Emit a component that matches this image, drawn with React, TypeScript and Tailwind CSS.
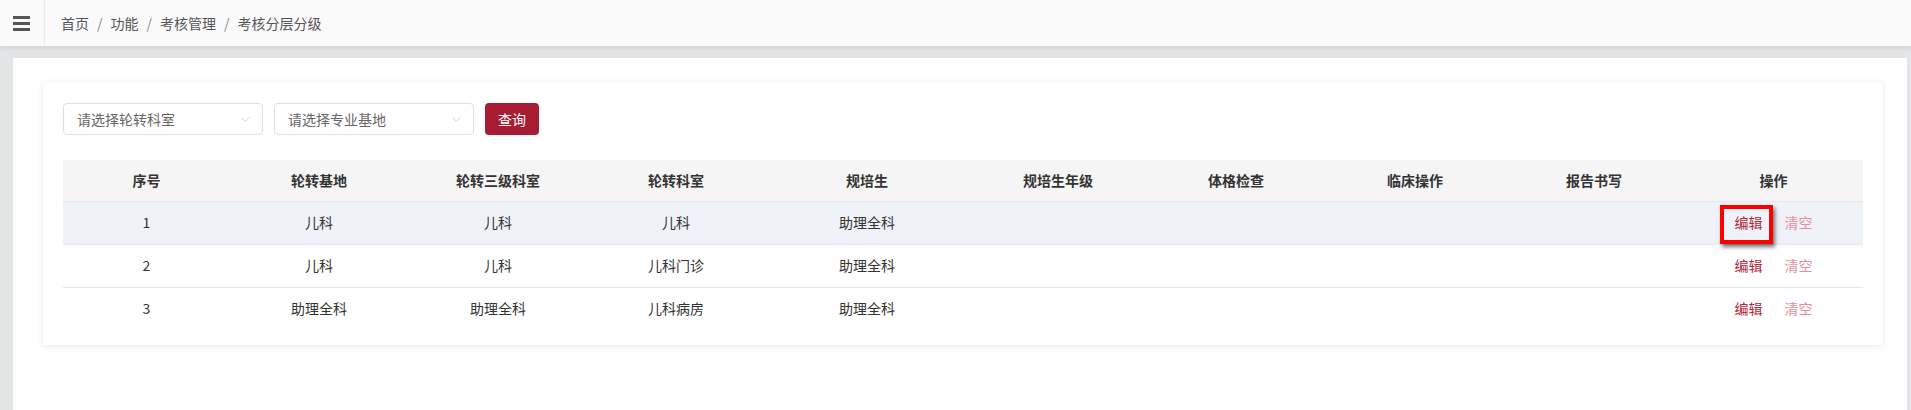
import { ChevronDown } from 'lucide-react';

type Row = {
  id: number;
  base: string;
  thirdDept: string;
  dept: string;
  trainee: string;
};

const columns: { title: string; width: string }[] = [
  { title: '序号', width: 'w-[167px]' },
  { title: '轮转基地', width: 'w-[178px]' },
  { title: '轮转三级科室', width: 'w-[180px]' },
  { title: '轮转科室', width: 'w-[176px]' },
  { title: '规培生', width: 'w-[206px]' },
  { title: '规培生年级', width: 'w-[176px]' },
  { title: '体格检查', width: 'w-[180px]' },
  { title: '临床操作', width: 'w-[178px]' },
  { title: '报告书写', width: 'w-[180px]' },
  { title: '操作', width: 'w-[179px]' },
];

const rows: Row[] = [
  { id: 1, base: '儿科', thirdDept: '儿科', dept: '儿科', trainee: '助理全科' },
  { id: 2, base: '儿科', thirdDept: '儿科', dept: '儿科门诊', trainee: '助理全科' },
  { id: 3, base: '助理全科', thirdDept: '助理全科', dept: '儿科病房', trainee: '助理全科' },
];

function SelectBox({ placeholder }: { placeholder: string }) {
  return (
    <div className="flex h-[32px] w-[200px] items-center justify-between rounded-[4px] border border-[#dcdfe6] bg-white pl-[13px] pr-[9px]">
      <span className="text-[14px] text-[#666]">{placeholder}</span>
      <ChevronDown className="h-[15px] w-[15px] text-[#c0c4cc]" strokeWidth={1.2} />
    </div>
  );
}

export default function App() {
  return (
    <div
      className="flex h-screen flex-col overflow-hidden bg-[#e3e4e6] text-[#333]"
      style={{ fontFamily: '"Microsoft YaHei", "Noto Sans CJK SC", "Noto Sans", sans-serif' }}
    >
      {/* top bar */}
      <header className="relative z-10 flex h-[46px] shrink-0 items-center bg-[#fafafa] shadow-[0_2px_4px_rgba(0,0,0,0.08)]">
        <div className="flex h-full w-[45px] items-center border-r border-[#ebebeb] pl-[13px]">
          <div className="flex w-[17px] flex-col gap-[3px]">
            <span className="h-[3px] bg-[#555]" />
            <span className="h-[3px] bg-[#555]" />
            <span className="h-[3px] bg-[#555]" />
          </div>
        </div>
        <nav className="flex items-center pl-[16px] text-[14px] text-[#555]">
          <span>首页</span>
          <span className="mx-[8px] text-[#888]">/</span>
          <span>功能</span>
          <span className="mx-[8px] text-[#888]">/</span>
          <span>考核管理</span>
          <span className="mx-[8px] text-[#888]">/</span>
          <span>考核分层分级</span>
        </nav>
      </header>

      {/* content */}
      <div className="flex-1 pl-[13px] pr-[4px] pt-[12px]">
        <div className="h-full bg-white pl-[30px] pr-[24px] pt-[24px]">
          <div className="bg-white px-[20px] pb-[15px] pt-[21px] shadow-[0_1px_6px_rgba(0,0,0,0.09)]">
            <div className="flex items-center gap-[11px]">
              <SelectBox placeholder="请选择轮转科室" />
              <SelectBox placeholder="请选择专业基地" />
              <button className="h-[32px] w-[54px] rounded-[4px] bg-[#a71c32] text-[14px] text-white">
                查询
              </button>
            </div>

            <table className="mt-[25px] w-[1800px] table-fixed border-collapse text-[14px]">
              <colgroup>
                {columns.map((c) => (
                  <col key={c.title} className={c.width} />
                ))}
              </colgroup>
              <thead>
                <tr className="h-[41px] border-b border-[#e6e6e6] bg-[#f5f5f5]">
                  {columns.map((c) => (
                    <th key={c.title} className="text-center font-bold text-[#333]">
                      {c.title}
                    </th>
                  ))}
                </tr>
              </thead>
              <tbody>
                {rows.map((r, i) => (
                  <tr
                    key={r.id}
                    className={
                      i === 0
                        ? 'h-[43px] border-b border-[#e6e6e6] bg-[#eff2f9]'
                        : i === rows.length - 1
                          ? 'h-[43px]'
                          : 'h-[43px] border-b border-[#e6e6e6]'
                    }
                  >
                    <td className="text-center">{r.id}</td>
                    <td className="text-center">{r.base}</td>
                    <td className="text-center">{r.thirdDept}</td>
                    <td className="text-center">{r.dept}</td>
                    <td className="text-center">{r.trainee}</td>
                    <td />
                    <td />
                    <td />
                    <td />
                    <td className="relative">
                      <div className="flex items-center justify-center gap-[22px]">
                        <span className="cursor-pointer text-[#b3273b]">编辑</span>
                        <span className="cursor-pointer text-[#e3909c]">清空</span>
                      </div>
                      {i === 0 && (
                        <div className="pointer-events-none absolute left-[36px] top-[3px] h-[39px] w-[53px] border-[4px] border-[#ff0000] shadow-[2px_3px_4px_rgba(0,0,0,0.55)]" />
                      )}
                    </td>
                  </tr>
                ))}
              </tbody>
            </table>
          </div>
        </div>
      </div>
    </div>
  );
}
